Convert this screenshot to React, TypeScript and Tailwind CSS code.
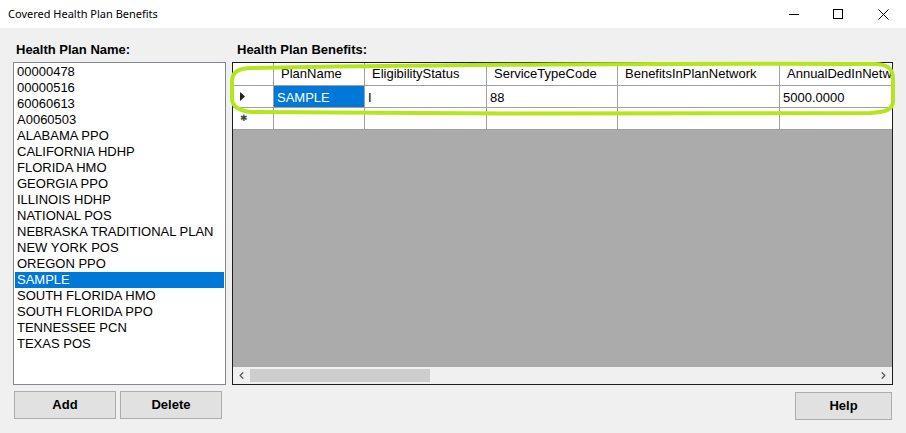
import { ChevronLeft, ChevronRight } from 'lucide-react'

const plans = [
  '00000478',
  '00000516',
  '60060613',
  'A0060503',
  'ALABAMA PPO',
  'CALIFORNIA HDHP',
  'FLORIDA HMO',
  'GEORGIA PPO',
  'ILLINOIS HDHP',
  'NATIONAL POS',
  'NEBRASKA TRADITIONAL PLAN',
  'NEW YORK POS',
  'OREGON PPO',
  'SAMPLE',
  'SOUTH FLORIDA HMO',
  'SOUTH FLORIDA PPO',
  'TENNESSEE PCN',
  'TEXAS POS',
]

const columns = [
  { name: 'PlanName', w: 'w-[91px]' },
  { name: 'EligibilityStatus', w: 'w-[122px]' },
  { name: 'ServiceTypeCode', w: 'w-[131px]' },
  { name: 'BenefitsInPlanNetwork', w: 'w-[162px]' },
  { name: 'AnnualDedInNetwork', w: 'w-[200px]' },
]

const row = ['SAMPLE', 'I', '88', '', '5000.0000']

function WinButton({ label, className }: { label: string; className: string }) {
  return (
    <button
      className={`flex items-center justify-center border border-[#adadad] bg-[#e1e1e1] text-[13px] font-bold text-black ${className}`}
    >
      {label}
    </button>
  )
}

export default function App() {
  return (
    <div className="relative flex h-[433px] w-[906px] flex-col overflow-hidden bg-[#f0f0f0] font-['Liberation_Sans',Arial,sans-serif] text-black">
      {/* title bar */}
      <div className="flex h-[28px] shrink-0 items-center bg-white">
        <span className="pl-2 font-['Noto_Sans',sans-serif] text-[11px] text-black">Covered Health Plan Benefits</span>
        <div className="ml-auto flex h-full items-center">
          <div className="flex h-full w-[44px] items-center justify-center">
            <div className="h-px w-[10px] bg-black" />
          </div>
          <div className="flex h-full w-[44px] items-center justify-center">
            <div className="h-[10px] w-[10px] border border-black" />
          </div>
          <div className="flex h-full w-[46px] items-center justify-center">
            <svg width="11" height="11" viewBox="0 0 11 11">
              <path d="M0.5 0.5 L10.5 10.5 M10.5 0.5 L0.5 10.5" stroke="#000" strokeWidth="1" />
            </svg>
          </div>
        </div>
      </div>

      {/* body */}
      <div className="flex flex-1 gap-[6px] pl-[13px] pt-[14px]">
        {/* left */}
        <div className="flex w-[213px] shrink-0 flex-col">
          <div className="h-[16px] pl-[3px] text-[13px] font-bold leading-[16px]">Health Plan Name:</div>
          <div className="mt-[4px] h-[323px] border border-[#828790] bg-white p-px">
            {plans.map((p) => (
              <div
                key={p}
                className={`h-[16px] pl-[2px] text-[13px] leading-[16px] ${p === 'SAMPLE' ? 'bg-[#0078d7] text-white' : ''}`}
              >
                {p}
              </div>
            ))}
          </div>
          <div className="mt-[6px] flex gap-[4px] pl-px">
            <WinButton label="Add" className="h-[28px] w-[102px]" />
            <WinButton label="Delete" className="h-[28px] w-[102px]" />
          </div>
        </div>

        {/* right */}
        <div className="flex w-[661px] shrink-0 flex-col">
          <div className="h-[16px] pl-[5px] text-[13px] font-bold leading-[16px]">Health Plan Benefits:</div>
          <div className="mt-[4px] flex h-[323px] flex-col overflow-hidden border border-[#1e1e1e] bg-[#ababab]">
            <div className="flex-1 overflow-hidden">
              {/* header */}
              <div className="flex h-[23px] bg-white">
                <div className="w-[41px] shrink-0 border-b border-r border-[#a0a0a0]" />
                {columns.map((c) => (
                  <div
                    key={c.name}
                    className={`${c.w} shrink-0 overflow-hidden whitespace-nowrap border-b border-r border-[#a0a0a0] pl-[7px] text-[13px] leading-[22px]`}
                  >
                    {c.name}
                  </div>
                ))}
              </div>
              {/* data row */}
              <div className="flex h-[22px] bg-white">
                <div className="flex w-[41px] shrink-0 items-center border-b border-r border-[#a0a0a0] pl-[7px]">
                  <svg width="5" height="9" viewBox="0 0 5 9">
                    <path d="M0 0 L5 4.5 L0 9 Z" fill="#222" />
                  </svg>
                </div>
                {columns.map((c, i) => (
                  <div
                    key={c.name}
                    className={`${c.w} shrink-0 border-b border-r border-[#a0a0a0] pl-[3px] text-[13px] leading-[23px] ${i === 0 ? 'bg-[#0078d7] text-white' : ''}`}
                  >
                    {row[i]}
                  </div>
                ))}
              </div>
              {/* new row */}
              <div className="flex h-[22px] bg-white">
                <div className="flex w-[41px] shrink-0 items-center border-b border-r border-[#a0a0a0] pl-[7px]">
                  <span className="text-[9px] leading-none text-[#444]">✱</span>
                </div>
                {columns.map((c) => (
                  <div key={c.name} className={`${c.w} shrink-0 border-b border-r border-[#a0a0a0]`} />
                ))}
              </div>
            </div>
            {/* horizontal scrollbar */}
            <div className="flex h-[17px] shrink-0 items-center bg-[#f0f0f0]">
              <div className="flex w-[17px] justify-center">
                <ChevronLeft size={11} strokeWidth={3} className="text-[#606060]" />
              </div>
              <div className="h-[13px] w-[180px] bg-[#cdcdcd]" />
              <div className="ml-auto flex w-[17px] justify-center">
                <ChevronRight size={11} strokeWidth={3} className="text-[#606060]" />
              </div>
            </div>
          </div>
          <div className="mt-[7px] flex justify-end pr-px">
            <WinButton label="Help" className="h-[28px] w-[97px]" />
          </div>
        </div>
      </div>

      {/* highlighter annotation */}
      <svg className="pointer-events-none absolute left-0 top-0" width="906" height="433">
        <path
          d="M252 68 C 400 65, 700 63, 874 64 C 888 64, 893 69, 893 78 L 893 102 C 892 110, 886 112, 870 113 C 700 114, 450 114, 252 112 C 238 111, 232 106, 232 98 L 232 82 C 232 72, 238 68, 252 68 Z"
          fill="none"
          stroke="#b5e61d"
          strokeWidth="4"
        />
      </svg>
    </div>
  )
}
